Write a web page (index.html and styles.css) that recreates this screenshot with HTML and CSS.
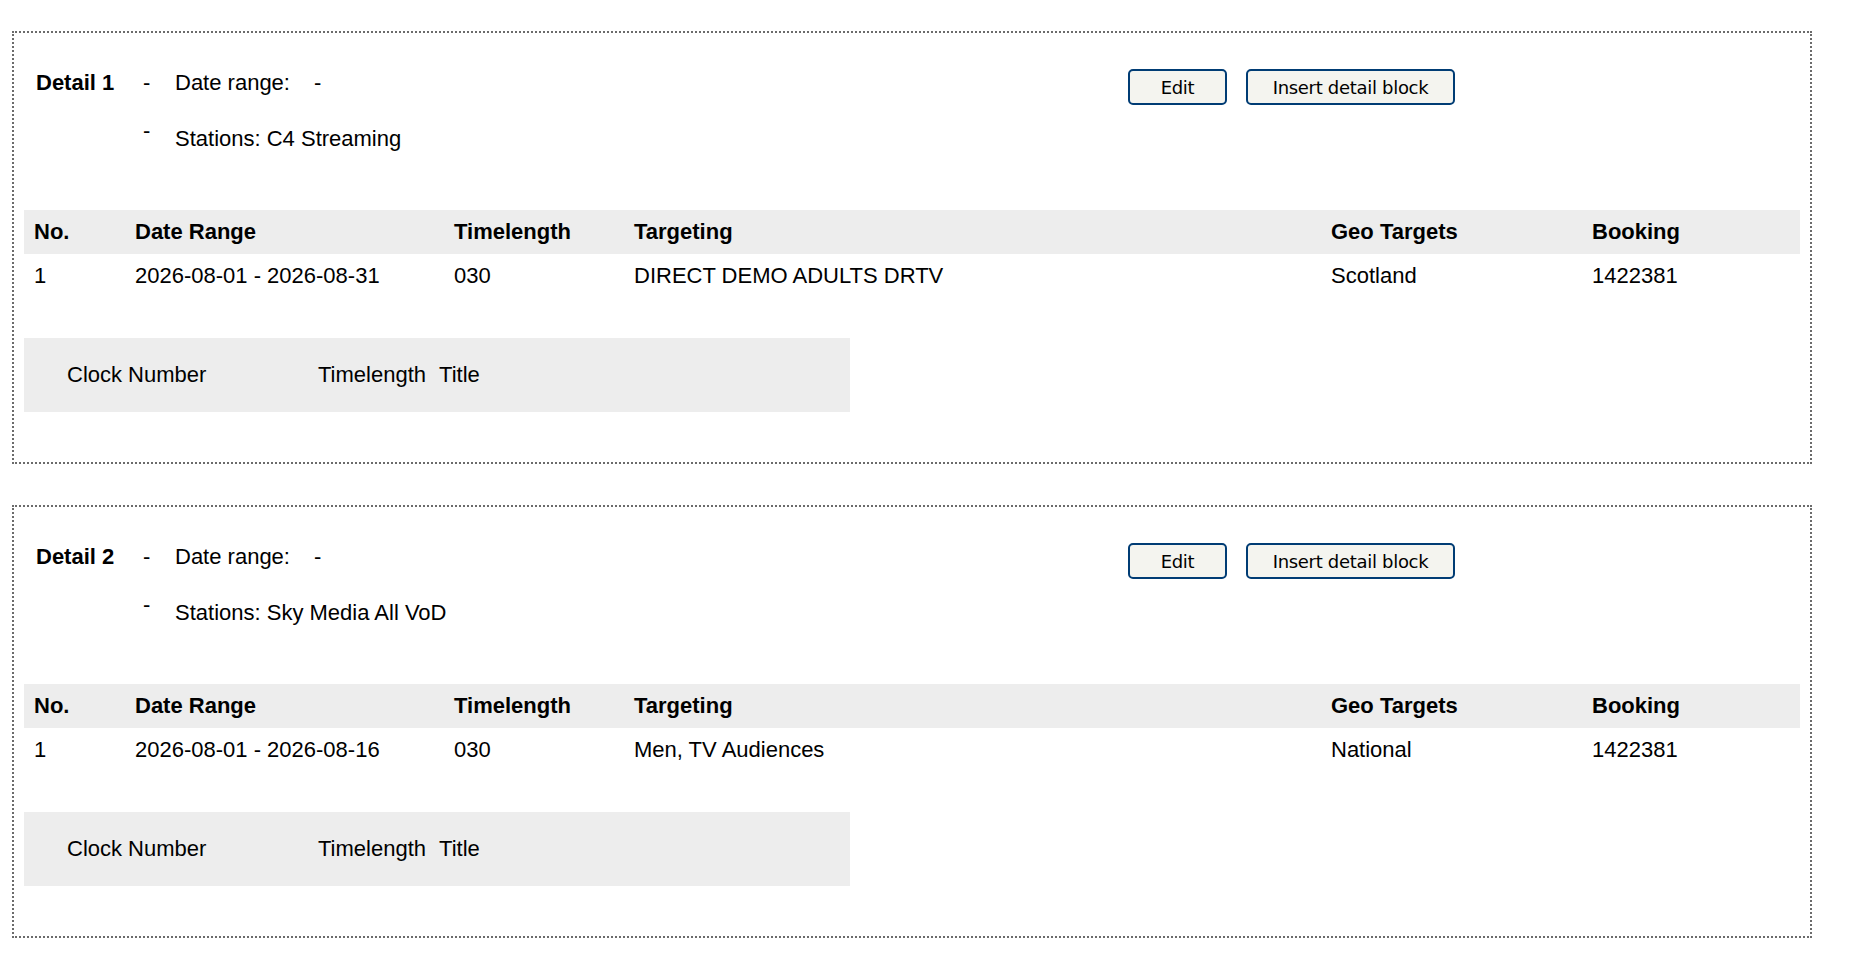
FILE: index.html
```html
<!DOCTYPE html>
<html lang="en">
<head>
  <meta charset="UTF-8" />
  <title>Details</title>
  <link rel="stylesheet" href="styles.css">
</head>
<body>
  <div class="page">

    <div class="detail">
      <div class="detail-head">
        <div class="detail-info">
          <div class="info-row">
            <span class="info-name">Detail 1</span>
            <span class="info-sep">-</span>
            <span class="info-label">Date range:</span>
            <span class="info-value">-</span>
          </div>
          <div class="info-row second">
            <span class="info-name"></span>
            <span class="info-sep raised">-</span>
            <span>Stations: C4 Streaming</span>
          </div>
        </div>
        <div class="detail-actions">
          <button class="btn btn-edit">Edit</button>
          <button class="btn btn-insert">Insert detail block</button>
        </div>
      </div>

      <table class="lines">
        <colgroup>
          <col class="c-no"><col class="c-date"><col class="c-len"><col class="c-target"><col class="c-geo"><col class="c-book">
        </colgroup>
        <thead>
          <tr><th>No.</th><th>Date Range</th><th>Timelength</th><th>Targeting</th><th>Geo Targets</th><th>Booking</th></tr>
        </thead>
        <tbody>
          <tr><td>1</td><td>2026-08-01 - 2026-08-31</td><td>030</td><td>DIRECT DEMO ADULTS DRTV</td><td>Scotland</td><td>1422381</td></tr>
        </tbody>
      </table>

      <div class="clocks">
        <span class="clock-num">Clock Number</span>
        <span class="clock-len">Timelength</span>
        <span class="clock-title">Title</span>
      </div>
    </div>

    <div class="detail">
      <div class="detail-head">
        <div class="detail-info">
          <div class="info-row">
            <span class="info-name">Detail 2</span>
            <span class="info-sep">-</span>
            <span class="info-label">Date range:</span>
            <span class="info-value">-</span>
          </div>
          <div class="info-row second">
            <span class="info-name"></span>
            <span class="info-sep raised">-</span>
            <span>Stations: Sky Media All VoD</span>
          </div>
        </div>
        <div class="detail-actions">
          <button class="btn btn-edit">Edit</button>
          <button class="btn btn-insert">Insert detail block</button>
        </div>
      </div>

      <table class="lines">
        <colgroup>
          <col class="c-no"><col class="c-date"><col class="c-len"><col class="c-target"><col class="c-geo"><col class="c-book">
        </colgroup>
        <thead>
          <tr><th>No.</th><th>Date Range</th><th>Timelength</th><th>Targeting</th><th>Geo Targets</th><th>Booking</th></tr>
        </thead>
        <tbody>
          <tr><td>1</td><td>2026-08-01 - 2026-08-16</td><td>030</td><td>Men, TV Audiences</td><td>National</td><td>1422381</td></tr>
        </tbody>
      </table>

      <div class="clocks">
        <span class="clock-num">Clock Number</span>
        <span class="clock-len">Timelength</span>
        <span class="clock-title">Title</span>
      </div>
    </div>

  </div>
</body>
</html>
```

FILE: styles.css
```css
body {
  margin: 0;
  background: #fff;
  color: #000;
  font-family: "Liberation Sans", Arial, sans-serif;
  font-size: 22px;
  line-height: 24px;
}
.page {
  padding: 31px 0 0 12px;
}
.detail {
  width: 1800px;
  box-sizing: border-box;
  border: 2px dotted #6b6b6b;
  padding: 38px 10px 50px 10px;
  margin-bottom: 41px;
}
.detail-head {
  display: flex;
}
.detail-info {
  width: 1104px;
}
.info-row {
  display: flex;
  height: 24px;
}
.info-row.second {
  margin-top: 32px;
}
.info-name {
  width: 107px;
  padding-left: 12px;
  font-weight: bold;
}
.info-sep {
  width: 32px;
}
.raised {
  position: relative;
  top: -8px;
}
.info-label {
  width: 139px;
}
.detail-actions {
  display: flex;
  gap: 19px;
  margin-top: -2px;
}
.btn {
  height: 36px;
  border: 2px solid #003c74;
  border-radius: 5px;
  background: #f4f4ef;
  color: #000;
  font-family: "DejaVu Sans", Tahoma, sans-serif;
  font-size: 18px;
  letter-spacing: -0.3px;
  padding: 0;
  cursor: pointer;
}
.btn-edit {
  width: 99px;
}
.btn-insert {
  width: 209px;
}
.lines {
  width: 100%;
  margin-top: 59px;
  border-collapse: collapse;
  table-layout: fixed;
}
.lines th, .lines td {
  text-align: left;
  padding: 10px 0 10px 12px;
  white-space: nowrap;
}
.lines th:first-child, .lines td:first-child {
  padding-left: 10px;
}
.lines thead tr {
  background: #ededed;
}
.c-no { width: 99px; }
.c-date { width: 319px; }
.c-len { width: 180px; }
.c-target { width: 697px; }
.c-geo { width: 261px; }
.c-book { width: 220px; }
.clocks {
  display: flex;
  width: 826px;
  margin-top: 40px;
  padding: 25px 0 25px 43px;
  box-sizing: border-box;
  background: #ededed;
}
.clock-num {
  width: 251px;
}
.clock-len {
  margin-right: 13px;
}
```
